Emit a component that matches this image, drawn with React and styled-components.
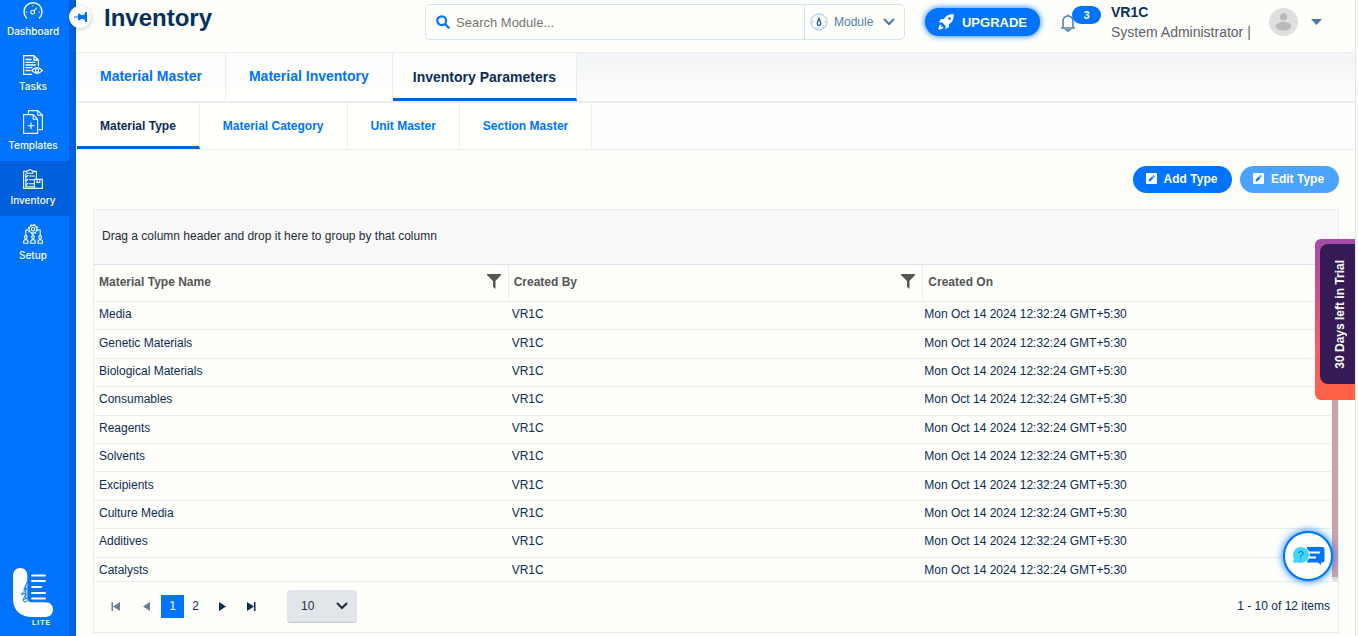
import React from "react";
import styled, { createGlobalStyle } from "styled-components";

const Global = createGlobalStyle`
  * { box-sizing: border-box; }
  body { margin: 0; background: #fefffb; font-family: "Liberation Sans", Arial, sans-serif; font-size: 12px; color: #0b2c55; }
  button, input, select { font-family: inherit; }
  a { text-decoration: none; }
`;

const blue = "#0073ff";
const deep = "#005fdc";
const line = "#e9edf0";

const Shell = styled.div`
  display: flex;
  min-height: 100vh;
  padding-right: 2px;
`;

const Sidebar = styled.aside`
  position: relative;
  flex: none;
  width: 76px;
  border-right: 7px solid ${deep};
  background: ${blue};
  display: flex;
  flex-direction: column;
  justify-content: space-between;
`;

const SideNav = styled.nav`
  display: flex;
  flex-direction: column;
  margin-top: -8px;
`;

const SideLink = styled.a`
  display: flex;
  flex-direction: column;
  align-items: center;
  gap: 5px;
  padding: 8px 3px 10px 0;
  background: ${(p) => (p.$active ? deep : "transparent")};
  color: #fff;
  font-family: Inter, sans-serif;
  font-size: 10px;
  font-weight: 500;
  line-height: 12px;
  svg { display: block; }
`;

const PinButton = styled.button`
  position: absolute;
  z-index: 2;
  top: 6px;
  right: -22px;
  width: 22px;
  height: 22px;
  padding: 0;
  border: 0;
  border-radius: 50%;
  background: #fff;
  box-shadow: 0 1px 4px rgba(0, 40, 100, 0.25);
  display: grid;
  place-items: center;
`;

const Logo = styled.div`
  padding: 0 0 8px 12px;
  svg { display: block; }
`;

const Main = styled.main`
  flex: 1;
  min-width: 0;
  border-right: 1px solid #e2e5e8;
`;

const Header = styled.header`
  display: flex;
  align-items: flex-start;
  height: 53px;
  padding: 0 33px 0 28px;
  border-bottom: 1px solid ${line};
`;

const Title = styled.h1`
  flex: 1;
  margin: 0;
  padding-top: 4px;
  font-size: 24px;
  line-height: 28px;
  color: #052f5f;
`;

const Search = styled.div`
  display: flex;
  align-items: center;
  width: 480px;
  height: 36px;
  margin: 4px 20px 0 0;
  border: 1px solid #d5e3f7;
  border-radius: 5px;
  padding-left: 10px;
  svg { display: block; flex: none; }
`;

const SearchInput = styled.input`
  flex: 1;
  min-width: 0;
  height: 34px;
  padding: 0 0 0 6px;
  border: 0;
  outline: 0;
  background: transparent;
  font-size: 13px;
  &::placeholder { color: #757575; opacity: 1; }
`;

const ModuleButton = styled.button`
  display: flex;
  align-items: center;
  width: 100px;
  height: 34px;
  padding: 0 9px 0 5px;
  border: 0;
  border-left: 1px solid #d5e3f7;
  background: transparent;
  font-size: 12px;
  color: #4d7ba9;
  span { flex: 1; text-align: left; padding-left: 6px; }
`;

const Upgrade = styled.button`
  display: flex;
  align-items: center;
  justify-content: center;
  gap: 8px;
  width: 115px;
  height: 28px;
  margin: 8px 20px 0 0;
  padding: 0;
  border: 0;
  border-radius: 14px;
  background: ${blue};
  box-shadow: 0 0 6px ${blue};
  color: #fff;
  font-size: 13px;
  font-weight: 700;
`;

const Bell = styled.button`
  position: relative;
  width: 18px;
  height: 20px;
  margin: 12px 33px 0 0;
  padding: 0;
  border: 0;
  background: transparent;
  svg { display: block; }
`;

const Badge = styled.span`
  position: absolute;
  left: 12px;
  top: -6px;
  width: 29px;
  height: 18px;
  border-radius: 9px;
  background: ${blue};
  color: #fff;
  font-size: 11px;
  font-weight: 700;
  line-height: 18px;
`;

const User = styled.div`
  width: 158px;
  padding-top: 2px;
  font-size: 14px;
  line-height: 20px;
  color: #5b6168;
  strong { display: block; color: #052f5f; }
`;

const ProfileButton = styled.button`
  display: flex;
  align-items: center;
  gap: 13px;
  margin-top: 8px;
  padding: 0;
  border: 0;
  background: transparent;
  svg { display: block; }
`;

const Tabs = styled.nav`
  display: flex;
  padding-left: 1px;
  height: ${(p) => (p.$sub ? "47px" : "50px")};
  border-bottom: ${(p) => (p.$sub ? "1px" : "2px")} solid ${line};
  background: ${(p) => (p.$sub ? "#fdfdfb" : "linear-gradient(#f2f4f6, #fcfcfb 80%)")};
`;

const Tab = styled.a`
  display: flex;
  align-items: center;
  justify-content: center;
  padding: ${(p) => (p.$active ? "3px" : "0")} ${(p) => (p.$active && !p.$sub ? "20px" : "23px")} ${(p) => (p.$active || p.$sub ? "0" : "2px")};
  border-right: 1px solid ${line};
  border-bottom: ${(p) => (p.$active ? `3px solid ${deep}` : "0")};
  background: rgba(255, 255, 252, 0.8);
  color: ${(p) => (p.$active ? "#0b2c55" : blue)};
  font-size: ${(p) => (p.$sub ? "12px" : "14px")};
  font-weight: 700;
`;

const Content = styled.section`
  padding: 16px 16px 3px 17px;
`;

const Actions = styled.div`
  display: flex;
  justify-content: flex-end;
  gap: 8px;
  margin-bottom: 16px;
`;

const ActionButton = styled.button`
  display: flex;
  align-items: center;
  justify-content: center;
  gap: 7px;
  width: 99px;
  height: 27px;
  padding: 0 2px 2px 0;
  border: 0;
  border-radius: 14px;
  background: ${(p) => (p.$muted ? "#4ba2ff" : blue)};
  color: #fff;
  font-size: 12px;
  font-weight: 700;
`;

const Grid = styled.div`
  border: 1px solid ${line};
`;

const GroupPanel = styled.div`
  height: 55px;
  padding: 0 8px;
  border-bottom: 1px solid #dbe1e8;
  background: #f9f9f9;
  line-height: 52px;
  color: #222b36;
`;

const GridBody = styled.div`
  position: relative;
  height: 317px;
  overflow: hidden;
  border-bottom: 1px solid ${line};
`;

const ScrollTrack = styled.div`
  position: absolute;
  top: 37px;
  right: 0;
  bottom: 0;
  width: 6px;
  border-radius: 3px;
  background: #c9a3ab;
  border-bottom: 4px solid #dcdcdc;
`;

const Table = styled.table`
  width: 100%;
  height: 321px;
  border-collapse: separate;
  border-spacing: 0;
  table-layout: fixed;
`;

const HeadCell = styled.th`
  height: 37px;
  padding: 0 7px 0 5px;
  border-bottom: 1px solid ${line};
  text-align: left;
  color: #555;
  &:not(:last-child) { border-right: 1px solid ${line}; }
  div { display: flex; justify-content: space-between; align-items: center; height: 32px; margin-bottom: 3px; }
`;

const Cell = styled.td`
  padding: 0 0 3px 5px;
  border-bottom: 1px solid ${line};
  &:nth-child(2) { padding-left: 3px; }
  &:nth-child(3) { padding-left: 1px; }
`;

const Pager = styled.footer`
  display: flex;
  align-items: center;
  height: 50px;
  padding: 0 8px 2px 10px;
`;

const PageButton = styled.button`
  width: 23px;
  height: 23px;
  margin-right: ${(p) => p.$gap || 0}px;
  padding: 0;
  border: 0;
  background: ${(p) => (p.$active ? blue : "transparent")};
  color: ${(p) => (p.$active ? "#fff" : "#0b2c55")};
  font-size: 12px;
  display: grid;
  place-items: center;
`;

const SizePicker = styled.label`
  position: relative;
  display: block;
  margin-left: 25px;
  svg { position: absolute; right: 9px; top: 12px; pointer-events: none; }
`;

const SizeSelect = styled.select`
  appearance: none;
  display: block;
  width: 70px;
  height: 33px;
  padding: 0 14px;
  border: 0;
  border-bottom: 1px solid #c3c8cb;
  border-radius: 4px;
  background: #e0e6e9;
  color: #222b36;
  font-size: 12px;
`;

const Count = styled.span`
  margin-left: auto;
`;

const Trial = styled.aside`
  position: fixed;
  z-index: 3;
  top: 239px;
  right: 3px;
  width: 40px;
  height: 161px;
  padding: 5px 0 16px 5px;
  border-radius: 6px 0 0 6px;
  background: linear-gradient(#a24bab, #ff5a68 70%, #ff6242);
`;

const TrialLabel = styled.div`
  display: grid;
  place-items: center;
  height: 140px;
  padding-left: 4px;
  border-radius: 8px 0 0 8px;
  background: #351a56;
  color: #fff;
  font-weight: 700;
  span { writing-mode: vertical-rl; transform: rotate(180deg); white-space: nowrap; }
`;

const ChatButton = styled.button`
  position: fixed;
  z-index: 3;
  right: 25px;
  bottom: 55px;
  width: 50px;
  height: 50px;
  padding: 0;
  border: 2px solid ${blue};
  border-radius: 50%;
  background: #fff;
  box-shadow: 0 0 8px ${blue};
  display: grid;
  place-items: center;
`;

const thin = { fill: "none", stroke: "#fff", strokeWidth: 1.1, strokeLinecap: "round", strokeLinejoin: "round" };

const DashboardIcon = () => (
  <svg width="20" height="20" viewBox="0 0 20 20" {...thin}>
    <path d="M3.5 18A9 9 0 1 1 16.5 18" strokeWidth="1.4" />
    <circle cx="9.6" cy="12.2" r="1.9" />
    <path d="M11 10.8 13.6 8M3.4 12H4M16 12h.6M10 5.5v.4" />
  </svg>
);
const TasksIcon = () => (
  <svg width="20" height="20" viewBox="0 0 20 20" {...thin}>
    <path d="M8.5 19.4H.6V.6H11l4.400 4.400v6M11 .6V5h4.400M3 4.500h5M3 7.300h9M3 10h9.500M3 12.700h6M3 15.500h4" strokeWidth="1.300" />
    <path d="M8.800 15.600Q14 9.800 19.400 15.600 14 20.800 8.800 15.600Z" strokeWidth="1.300" />
    <circle cx="14" cy="15.400" r="1.600" />
  </svg>
);
const TemplatesIcon = () => (
  <svg width="20" height="24" viewBox="0 0 20 24" {...thin}>
    <path d="M.6 4.600h9.600l4.400 4.600v14.200H.6ZM10.200 4.600v4.600h4.400M5.400 4.400V.6h9.400l4.600 4.600v14.600h-4.600M14.800.6v4.600h4.600M8 12.800v6M5 15.800h6" />
  </svg>
);
const InventoryIcon = () => (
  <svg width="20" height="20" viewBox="0 0 20 20" {...thin}>
    <path d="M11.400 19.400H.6V2.400H4M10 2.400h3.400v7M4 1.800h1.500Q7 -.8 8.500 1.800H10v2.400H4ZM2.800 7l.8.800L5 6.300M6.500 7h5M2.800 10.800l.8.800L5 10.100M6.500 10.800h4M2.800 14.800l.8.800L5 14.100M6.500 14.800h4M2.800 4.800v13h8" />
    <path d="M11.400 10.300h8v9.100h-8ZM14 10.300v3.200h2.800v-3.200" />
  </svg>
);
const SetupIcon = () => (
  <svg width="20" height="20" viewBox="0 0 20 20" {...thin}>
    <circle cx="10" cy="5.200" r="3.800" />
    <circle cx="10" cy="5.200" r="4.600" strokeWidth="1.200" strokeLinecap="butt" strokeDasharray="1.800 1.810" />
    <circle cx="10" cy="5.200" r="1.700" />
    <path d="M4.800 6H2.800v5M15.200 6h2v5M10 9.800v1.700" />
    <circle cx="2.800" cy="13" r="1.400" /><circle cx="10" cy="13" r="1.400" /><circle cx="17.200" cy="13" r="1.400" />
    <path d="M.6 19.200v-1.600q0-2 2.200-2t2.200 2v1.600ZM7.800 19.200v-1.600q0-2 2.200-2t2.200 2v1.600ZM15 19.200v-1.600q0-2 2.200-2t2.200 2v1.600Z" />
  </svg>
);
const LogoMark = () => (
  <svg width="44" height="60" viewBox="0 0 44 60" role="img" aria-label="Lite">
    <path fill="#fff" d="M1 8C1 3 4 0 8.200 0 12.700 0 15.300 3 15.300 7.500V30c0 3 1.700 4.200 4.700 4.200h13.500c5 0 7.500 3.300 7.500 7.300 0 4.500-3 7.500-7.500 7.500H20C8.500 49 1 42 1 31Z" />
    <path fill="none" stroke={blue} strokeWidth="1" d="M15.500 13c-1.500 4-2.700 6.500-3.700 9l3-1.500C12 24 10.500 25 9 26.500l5-1C12.500 29 12 30 11 31.500l4.500-1.500M13.800 17v14.500M12 24.500v1M11 32l1.500 2.200 3-1.500" />
    <path stroke="#fff" strokeWidth="2" strokeLinecap="round" d="M20 7.500h13M20 13h13M20 19h9M20 25h13M20 30.500h13" />
    <text x="20" y="57" fill="#fff" fontSize="7" fontWeight="700" letterSpacing="1" fontFamily="Liberation Sans">LITE</text>
  </svg>
);
const Pin = () => (
  <svg width="13" height="10" viewBox="0 0 13 10" fill={blue}>
    <path d="M0 4.500h4V2.600l1.200-1.100h1L6.700 3h3L11 1.500V0h2v10h-2V8.500L9.700 7h-3l-.5 1.500h-1L4 7.400V5.500H0Z" />
  </svg>
);
const SearchIcon = () => (
  <svg width="14" height="14" viewBox="0 0 14 14" fill="none" stroke={blue} strokeWidth="2.200" strokeLinecap="round">
    <circle cx="5.700" cy="5.700" r="4.400" /><path d="m9.200 9.200 3.500 3.500" />
  </svg>
);
const GaugeIcon = () => (
  <svg width="18" height="18" viewBox="0 0 18 18" fill="none">
    <circle cx="9" cy="9" r="8" stroke="#b9d0ea" strokeWidth="1.300" />
    <path d="M2 9h2M14 9h2M9 2v1.500M4.500 15h9" stroke="#b9d0ea" />
    <path d="M9 5.500c1 2.500 1.700 3.500 1.700 5a1.700 1.900 0 0 1-3.400 0C7.300 9 8 8 9 5.500Z" stroke="#0a56b8" strokeWidth="1.300" />
  </svg>
);
const Chevron = ({ color, width = 12 }) => (
  <svg width={width} height="8" viewBox="0 0 12 8" fill="none" stroke={color} strokeWidth="2" strokeLinecap="round"><path d="m1.500 1.500 4.500 4.500 4.500-4.500" /></svg>
);
const Rocket = () => (
  <svg width="16" height="16" viewBox="0 0 16 16" fill="#fff">
    <path fillRule="evenodd" d="M15.700.3C11-.1 8 1.500 5.800 5H3L.8 8.600l3.200-.3 3.700 3.700-.3 3.200L11 13v-2.800C14.500 8 16.100 5 15.700.3ZM11.500 3.200a1.400 1.400 0 1 1 0 2.800 1.400 1.400 0 0 1 0-2.800Z" />
    <path d="M2.800 10.500C1 11.300.6 13 .4 15.600 3 15.400 4.700 15 5.500 13.200l-1-.8-1.900 1 1-1.900Z" />
  </svg>
);
const BellIcon = () => (
  <svg width="16" height="19" viewBox="0 0 16 19" fill="none" stroke="#5580b0" strokeWidth="1.600">
    <path d="M1 15h14M3 15V8.500C3 5 5 3 8 3s5 2 5 5.500V15M8 1.500V3" /><path d="M6.500 17h3l-1.500 1Z" fill="#5580b0" />
  </svg>
);
const Avatar = () => (
  <svg width="29" height="28" viewBox="0 0 29 28"><ellipse cx="14.500" cy="14" rx="14.500" ry="14" fill="#dfdfdf" /><circle cx="14.500" cy="8.800" r="3.600" fill="#b9b9b9" /><ellipse cx="14.500" cy="18.200" rx="7.700" ry="4.200" fill="#b9b9b9" /></svg>
);
const EditIcon = () => (
  <svg width="11" height="11" viewBox="0 0 11 11"><rect width="11" height="11" rx="1" fill="#fff" /><path d="m2.500 8.500.5-2 3.200-3.200 1.500 1.500L4.500 8ZM6.800 2.700l.7-.7 1.500 1.500-.7.700Z" fill={blue} /></svg>
);
const Filter = () => (
  <svg width="14" height="15" viewBox="0 0 14 15" fill="#555"><path d="M0 0h14v1L8.500 7v8L6 12.800V7L0 1Z" /></svg>
);
const Arrow = ({ flip, bar, faded }) => (
  <svg width="10" height="9" viewBox="0 0 10 9" fill={faded ? "#6a7f96" : "#0b2c55"} transform={flip ? "scale(-1 1)" : undefined}>
    <path d="M1 0 8 4.500 1 9Z" />{bar && <path d="M8 0h1.500v9H8Z" />}
  </svg>
);
const ChatIcon = () => (
  <svg width="33" height="20" viewBox="0 0 33 20">
    <path fill={blue} d="M15 1h15.500q2 0 2 2v11.500q0 2-2 2H29V19l-3-2.500H15Z" />
    <path stroke="#fff" strokeWidth="2" d="M17 6.500h11M17 11.500h7" />
    <circle cx="9" cy="9" r="8.800" fill="#fff" /><path fill="#43d5ff" d="M9 1a8 8 0 1 1-3 15.400L1 17l1-4A8 8 0 0 1 9 1Z" />
    <text x="5.800" y="13" fontSize="11" fontFamily="Liberation Sans" fill="#006be8">?</text>
  </svg>
);

const sideItems = [
  ["Dashboard", DashboardIcon], ["Tasks", TasksIcon], ["Templates", TemplatesIcon], ["Inventory", InventoryIcon], ["Setup", SetupIcon],
];
const materials = ["Media", "Genetic Materials", "Biological Materials", "Consumables", "Reagents", "Solvents", "Excipients", "Culture Media", "Additives", "Catalysts"];

export default function App() {
  return (
    <Shell>
      <Global />
      <Sidebar>
        <SideNav aria-label="Modules">
          {sideItems.map(([name, Icon]) => (
            <SideLink key={name} href="#" $active={name === "Inventory"}><Icon />{name}</SideLink>
          ))}
        </SideNav>
        <PinButton aria-label="Pin menu"><Pin /></PinButton>
        <Logo><LogoMark /></Logo>
      </Sidebar>
      <Main>
        <Header>
          <Title>Inventory</Title>
          <Search>
            <SearchIcon />
            <SearchInput aria-label="Search Module" placeholder="Search Module..." />
            <ModuleButton><GaugeIcon /><span>Module</span><Chevron color="#4d7ba9" /></ModuleButton>
          </Search>
          <Upgrade><Rocket />UPGRADE</Upgrade>
          <Bell aria-label="Notifications"><BellIcon /><Badge>3</Badge></Bell>
          <User><strong>VR1C</strong>System Administrator |</User>
          <ProfileButton aria-label="Profile menu">
            <Avatar />
            <svg width="11" height="6" viewBox="0 0 11 6"><path d="M0 0h11L5.500 6Z" fill="#4d7ba9" /></svg>
          </ProfileButton>
        </Header>
        <Tabs aria-label="Inventory sections">
          {["Material Master", "Material Inventory", "Inventory Parameters"].map((t, i) => (
            <Tab key={t} href="#" $active={i === 2}>{t}</Tab>
          ))}
        </Tabs>
        <Tabs $sub aria-label="Inventory parameters">
          {["Material Type", "Material Category", "Unit Master", "Section Master"].map((t, i) => (
            <Tab key={t} href="#" $sub $active={i === 0}>{t}</Tab>
          ))}
        </Tabs>
        <Content>
          <Actions>
            <ActionButton><EditIcon />Add Type</ActionButton>
            <ActionButton $muted><EditIcon />Edit Type</ActionButton>
          </Actions>
          <Grid>
            <GroupPanel>Drag a column header and drop it here to group by that column</GroupPanel>
            <GridBody>
              <Table>
                <thead>
                  <tr>
                    <HeadCell><div>Material Type Name<Filter /></div></HeadCell>
                    <HeadCell><div>Created By<Filter /></div></HeadCell>
                    <HeadCell><div>Created On</div></HeadCell>
                  </tr>
                </thead>
                <tbody>
                  {materials.map((m) => (
                    <tr key={m}><Cell>{m}</Cell><Cell>VR1C</Cell><Cell>Mon Oct 14 2024 12:32:24 GMT+5:30</Cell></tr>
                  ))}
                </tbody>
              </Table>
              <ScrollTrack />
            </GridBody>
            <Pager>
              <PageButton $gap={7} aria-label="First page"><Arrow flip bar faded /></PageButton>
              <PageButton $gap={4} aria-label="Previous page"><Arrow flip faded /></PageButton>
              <PageButton $active>1</PageButton>
              <PageButton $gap={4}>2</PageButton>
              <PageButton $gap={5} aria-label="Next page"><Arrow /></PageButton>
              <PageButton aria-label="Last page"><Arrow bar /></PageButton>
              <SizePicker>
                <SizeSelect aria-label="Items per page" defaultValue="10"><option>10</option><option>20</option><option>50</option></SizeSelect>
                <Chevron color="#222b36" />
              </SizePicker>
              <Count>1 - 10 of 12 items</Count>
            </Pager>
          </Grid>
        </Content>
      </Main>
      <Trial><TrialLabel><span>30 Days left in Trial</span></TrialLabel></Trial>
      <ChatButton aria-label="Help chat"><ChatIcon /></ChatButton>
    </Shell>
  );
}
